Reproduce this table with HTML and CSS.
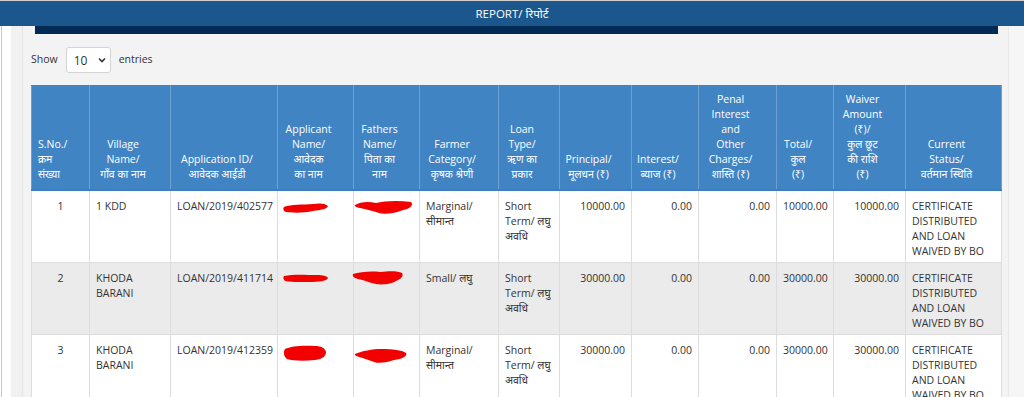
FILE: index.html
```html
<!DOCTYPE html>
<html lang="hi">
<head>
    <meta charset="UTF-8">
    <meta name="viewport" content="width=device-width, initial-scale=1.0">
    <title>Report</title>
    <link rel="stylesheet" href="styles.css">
</head>
<body>
    <div class="topbar">REPORT/ रिपोर्ट</div>

    <div class="page">
        <div class="gutter"></div>
        <div class="main">
            <div class="panel">
                <div class="panel-heading"></div>

                <div class="length-row">
                    <label>Show</label>
                    <div class="select-box">
                        <span>10</span>
                        <svg width="8" height="6" viewBox="0 0 8 6"><path d="M1 1.5 L4 4.5 L7 1.5" fill="none" stroke="#333" stroke-width="1.6"/></svg>
                    </div>
                    <label>entries</label>
                </div>

                <table class="report">
                    <colgroup>
                        <col class="c-sno"><col class="c-village"><col class="c-appid"><col class="c-name">
                        <col class="c-father"><col class="c-cat"><col class="c-loan"><col class="c-prin">
                        <col class="c-int"><col class="c-penal"><col class="c-total"><col class="c-waiver">
                        <col class="c-status">
                    </colgroup>
                    <thead>
                        <tr>
                            <th class="left">S.No./<br>क्रम<br>संख्या</th>
                            <th>Village<br>Name/<br>गाँव का नाम</th>
                            <th>Application ID/<br>आवेदक आईडी</th>
                            <th>Applicant<br>Name/<br>आवेदक<br>का नाम</th>
                            <th>Fathers<br>Name/<br>पिता का<br>नाम</th>
                            <th>Farmer<br>Category/<br>कृषक श्रेणी</th>
                            <th>Loan<br>Type/<br>ऋण का<br>प्रकार</th>
                            <th>Principal/<br>मूलधन (₹)</th>
                            <th>Interest/<br>ब्याज (₹)</th>
                            <th>Penal<br>Interest<br>and<br>Other<br>Charges/<br>शास्ति (₹)</th>
                            <th>Total/<br>कुल<br>(₹)</th>
                            <th>Waiver<br>Amount<br>(₹)/<br>कुल छूट<br>की राशि<br>(₹)</th>
                            <th>Current<br>Status/<br>वर्तमान स्थिति</th>
                        </tr>
                    </thead>
                    <tbody>
                        <tr>
                            <td class="center">1</td>
                            <td>1 KDD</td>
                            <td>LOAN/2019/402577</td>
                            <td><svg class="redact r-a" width="46" height="12" viewBox="0 0 46 12"><path d="M1 5 C8 2 20 3 30 2 C36 1 42 1 45 4 C44 7 38 8 30 9 C22 11 10 11 3 10 C0 9 0 6 1 5 Z" fill="#f20000"/></svg></td>
                            <td><svg class="redact r-b" width="60" height="16" viewBox="0 0 60 16"><path d="M1 5 C6 2 14 1 22 3 C30 1 44 0 57 2 C60 5 56 9 49 10 C42 13 31 15 25 13 C19 11 12 9 6 8 C2 7 0 6 1 5 Z" fill="#f20000"/></svg></td>
                            <td>Marginal/ सीमान्त</td>
                            <td>Short Term/ लघु अवधि</td>
                            <td class="right">10000.00</td>
                            <td class="right">0.00</td>
                            <td class="right">0.00</td>
                            <td>10000.00</td>
                            <td class="right">10000.00</td>
                            <td>CERTIFICATE DISTRIBUTED AND LOAN WAIVED BY BO</td>
                        </tr>
                        <tr class="odd">
                            <td class="center">2</td>
                            <td>KHODA BARANI</td>
                            <td>LOAN/2019/411714</td>
                            <td><svg class="redact r-c" width="46" height="10" viewBox="0 0 46 10"><path d="M1 3 C10 1 24 2 34 2 C40 2 44 3 45 5 C44 8 36 9 26 9 C16 9 6 9 2 8 C0 6 0 4 1 3 Z" fill="#f20000"/></svg></td>
                            <td><svg class="redact r-d" width="52" height="16" viewBox="0 0 52 16"><path d="M1 4 C8 2 18 1 28 2 C38 1 46 1 50 3 C52 6 49 9 44 11 C40 14 30 15 24 14 C18 13 12 10 6 9 C2 8 0 6 1 4 Z" fill="#f20000"/></svg></td>
                            <td>Small/ लघु</td>
                            <td>Short Term/ लघु अवधि</td>
                            <td class="right">30000.00</td>
                            <td class="right">0.00</td>
                            <td class="right">0.00</td>
                            <td>30000.00</td>
                            <td class="right">30000.00</td>
                            <td>CERTIFICATE DISTRIBUTED AND LOAN WAIVED BY BO</td>
                        </tr>
                        <tr>
                            <td class="center">3</td>
                            <td>KHODA BARANI</td>
                            <td>LOAN/2019/412359</td>
                            <td><svg class="redact r-e" width="44" height="16" viewBox="0 0 44 16"><path d="M2 4 C8 1 20 0 32 1 C38 1 42 3 43 7 C43 11 40 14 32 15 C22 16 10 16 4 14 C1 12 0 7 2 4 Z" fill="#f20000"/></svg></td>
                            <td><svg class="redact r-f" width="54" height="16" viewBox="0 0 54 16"><path d="M1 6 C8 3 18 1 28 1 C38 1 48 2 52 5 C54 8 48 11 40 12 C34 14 26 16 20 14 C14 12 10 10 5 9 C2 8 0 7 1 6 Z" fill="#f20000"/></svg></td>
                            <td>Marginal/ सीमान्त</td>
                            <td>Short Term/ लघु अवधि</td>
                            <td class="right">30000.00</td>
                            <td class="right">0.00</td>
                            <td class="right">0.00</td>
                            <td>30000.00</td>
                            <td class="right">30000.00</td>
                            <td>CERTIFICATE DISTRIBUTED AND LOAN WAIVED BY BO</td>
                        </tr>
                    </tbody>
                </table>
            </div>
        </div>
        <div class="gutter-right"></div>
    </div>
</body>
</html>
```

FILE: styles.css
```css
html, body {
    margin: 0;
    padding: 0;
    overflow: hidden;
}
body {
    font-family: "Open Sans", "Noto Sans", sans-serif;
    font-size: 10.5px;
    line-height: 15px;
    color: #333;
    background: #fff;
}
.topbar {
    height: 25px;
    border-top: 1px solid #cfcfcf;
    background-color: #1b578c;
    color: #fff;
    font-size: 11.5px;
    line-height: 25px;
    text-align: center;
}
.page {
    display: flex;
    min-height: 400px;
}
.gutter {
    width: 9px;
    margin-left: 1px;
    border-left: 1px solid #c6c6c6;
    background: #fff;
}
.main {
    flex: 1;
    background-color: #f1f1f1;
    padding-left: 11px;
    border-right: 1px solid #e9e9e9;
}
.gutter-right {
    width: 15px;
    background: #f6f6f6;
}
.panel {
    border-left: 1px solid #e6e6e6;
    background-color: #f3f3f3;
    padding: 0 6px 0 8px;
    height: 100%;
}
.panel-heading {
    height: 8px;
    margin: 0 4px;
    background-color: #012b54;
}
.length-row {
    display: flex;
    align-items: center;
    gap: 8px;
    margin-top: 13px;
    height: 26px;
}
.length-row label {
    font-size: 10.5px;
    margin-top: -2px;
}
.select-box {
    width: 45px;
    height: 26px;
    box-sizing: border-box;
    border: 1px solid #d4d4d4;
    border-radius: 3px;
    background: #fff;
    display: flex;
    align-items: center;
    justify-content: space-between;
    padding: 0 4px 0 7px;
    font-size: 12px;
    color: #333;
}
.report {
    width: 100%;
    margin-top: 12px;
    border-collapse: collapse;
    table-layout: fixed;
    background: #fff;
}
.c-sno { width: 58px; }
.c-village { width: 81px; }
.c-appid { width: 107px; }
.c-name { width: 76px; }
.c-father { width: 66px; }
.c-cat { width: 79px; }
.c-loan { width: 61px; }
.c-prin { width: 72px; }
.c-int { width: 67px; }
.c-penal { width: 78px; }
.c-total { width: 57px; }
.c-waiver { width: 72px; }
.c-status { width: 96px; }
.report th {
    background-color: #4184c4;
    color: #fff;
    font-weight: normal;
    text-align: center;
    vertical-align: bottom;
    padding: 6px 18px 7px 4px;
    border: 1px solid #6d9fd2;
    border-top-color: #4184c4;
    border-bottom: 2px solid #3d7fbf;
}
.report th.left {
    text-align: left;
    padding-left: 6px;
}
.report td {
    vertical-align: top;
    padding: 8px 6px 3px 6px;
    height: 60px;
    border: 1px solid #dddddd;
    text-align: left;
}
.report tr.odd td {
    background-color: #ebebeb;
}
.report td.center {
    text-align: center;
}
.report td.right {
    text-align: right;
}
.redact {
    display: block;
}
.r-a { margin: 3px 0 0 -1px; }
.r-b { margin: 1px 0 0 -6px; }
.r-c { margin: 2px 0 0 -1px; }
.r-d { margin: -1px 0 0 -8px; }
.r-e { margin: 2px 0 0 -1px; }
.r-f { margin: 5px 0 0 -6px; }
```
